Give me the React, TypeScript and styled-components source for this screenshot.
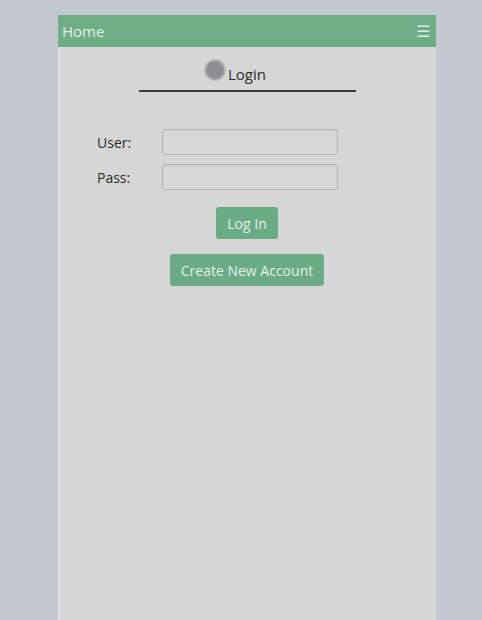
import React from "react";
import styled, { createGlobalStyle } from "styled-components";

const Global = createGlobalStyle`
  html, body { margin: 0; padding: 0; background: #c4c8d0; }
  body { font-family: "Open Sans", "Noto Sans", sans-serif; }
`;

const Page = styled.div`
  padding: 15px 0 0 58px;
  height: 620px;
  box-sizing: border-box;
  overflow: hidden;
`;

const Panel = styled.div`
  width: 378px;
  height: 605px;
  background: #d5d6d5;
  display: flex;
  flex-direction: column;
  box-shadow: inset 3px 0 0 #dcdddc;
`;

const Header = styled.div`
  height: 32px;
  background: #6fad87;
  display: flex;
  align-items: center;
  justify-content: space-between;
  padding: 0 6px 0 4px;
  color: #e3efe7;
  font-size: 15px;
`;

const Menu = styled.span`
  font-size: 16px;
  color: #dfece4;
`;

const TitleWrap = styled.div`
  display: flex;
  justify-content: center;
  padding-top: 15px;
`;

const Title = styled.div`
  position: relative;
  width: 217px;
  text-align: center;
  font-size: 15px;
  color: #2f2f2f;
  padding: 2px 0 6px;
  border-bottom: 2px solid #3a3a3c;
`;

const Dot = styled.span`
  position: absolute;
  left: 66px;
  top: -2px;
  width: 20px;
  height: 20px;
  border-radius: 50%;
  background: #8e8e93;
  filter: blur(1px);
`;

const Form = styled.div`
  display: grid;
  grid-template-columns: 65px 176px;
  row-gap: 9px;
  margin: 37px 0 0 39px;
  align-items: center;
`;

const Label = styled.label`
  font-size: 14px;
  color: #2a2a2a;
`;

const Input = styled.input`
  height: 26px;
  box-sizing: border-box;
  border: 1px solid #b5b5b5;
  border-radius: 3px;
  background: #d8d8d8;
  box-shadow: inset 0 1px 2px rgba(0,0,0,0.08);
`;

const Actions = styled.div`
  display: flex;
  flex-direction: column;
  align-items: center;
  gap: 15px;
  margin-top: 17px;
`;

const Button = styled.button`
  height: 32px;
  padding: 0 11px;
  border: none;
  border-radius: 3px;
  background: #6bab85;
  color: #e4efe8;
  font-family: inherit;
  font-size: 14px;
`;

export default function App() {
  return (
    <>
      <Global />
      <Page>
        <Panel>
          <Header>
            <span>Home</span>
            <Menu>☰</Menu>
          </Header>
          <TitleWrap>
            <Title>
              <Dot />
              Login
            </Title>
          </TitleWrap>
          <Form>
            <Label>User:</Label>
            <Input />
            <Label>Pass:</Label>
            <Input type="password" />
          </Form>
          <Actions>
            <Button>Log In</Button>
            <Button>Create New Account</Button>
          </Actions>
        </Panel>
      </Page>
    </>
  );
}
